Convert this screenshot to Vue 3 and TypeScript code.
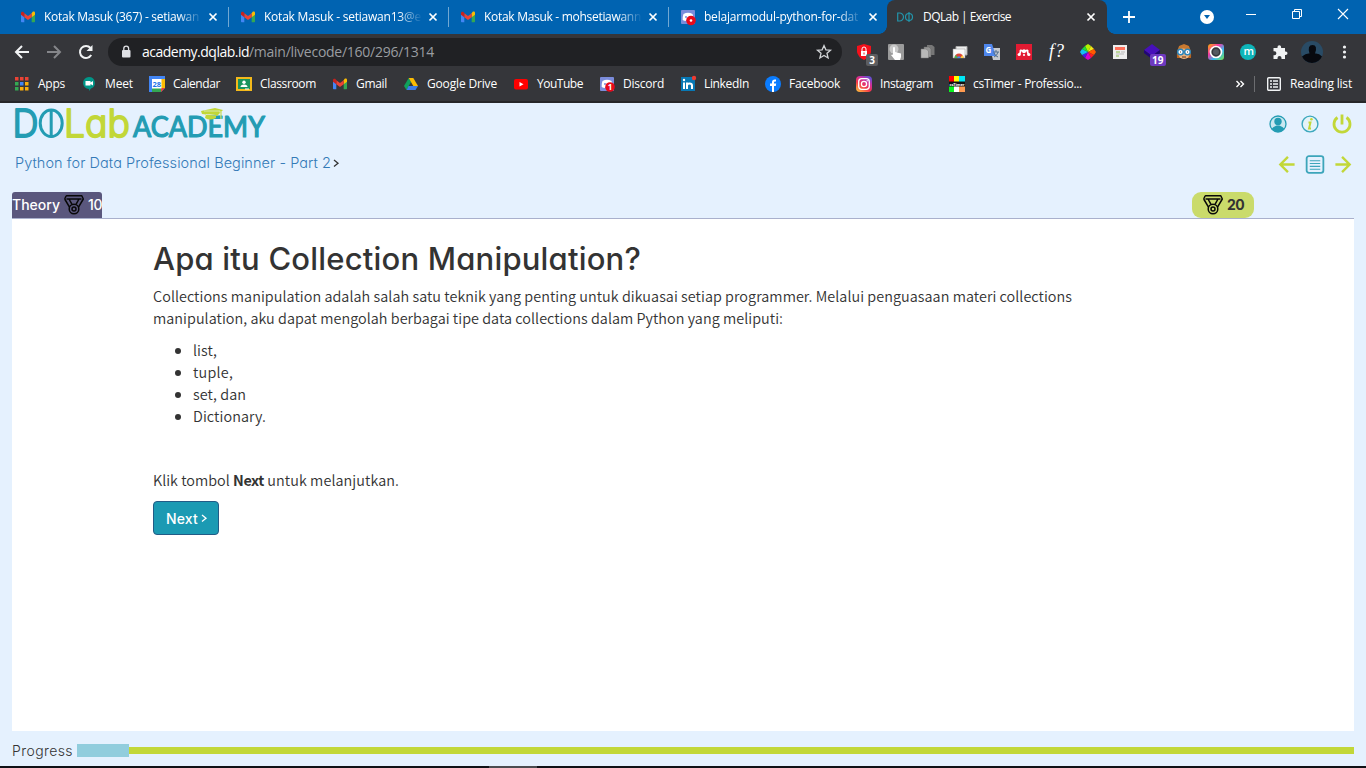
<script setup lang="ts">
interface Tab { title: string; width: number; icon: 'gmail' | 'discord' }
interface Bookmark { label: string; width: number; icon: string }

const tabs: Tab[] = [
  { title: 'Kotak Masuk (367) - setiawan', width: 155, icon: 'gmail' },
  { title: 'Kotak Masuk - setiawan13@e', width: 157, icon: 'gmail' },
  { title: 'Kotak Masuk - mohsetiawann', width: 157, icon: 'gmail' },
  { title: 'belajarmodul-python-for-dat', width: 154, icon: 'discord' },
]

const bookmarks: Bookmark[] = [
  { label: 'Apps', width: 27, icon: 'apps' },
  { label: 'Meet', width: 28, icon: 'meet' },
  { label: 'Calendar', width: 47, icon: 'calendar' },
  { label: 'Classroom', width: 56, icon: 'classroom' },
  { label: 'Gmail', width: 31, icon: 'gmail' },
  { label: 'Google Drive', width: 70, icon: 'drive' },
  { label: 'YouTube', width: 46, icon: 'youtube' },
  { label: 'Discord', width: 41, icon: 'discord1' },
  { label: 'LinkedIn', width: 45, icon: 'linkedin' },
  { label: 'Facebook', width: 51, icon: 'facebook' },
  { label: 'Instagram', width: 53, icon: 'instagram' },
  { label: 'csTimer - Professio...', width: 109, icon: 'cstimer' },
]

const topics: { text: string; width: number }[] = [
  { text: 'list,', width: 24 },
  { text: 'tuple,', width: 40 },
  { text: 'set, dan', width: 53 },
  { text: 'Dictionary.', width: 73 },
]

// Tracks a label so that it fills the given width in pixels.
const vFit = {
  mounted(el: HTMLElement, binding: { value: number }) {
    const natural = el.getBoundingClientRect().width
    const count = (el.textContent ?? '').length
    if (count > 0) el.style.letterSpacing = `${(binding.value - natural) / count}px`
  },
}
</script>

<template>
  <div class="window">
    <svg class="defs" width="0" height="0">
      <defs>
        <symbol id="gmail" viewBox="0 0 16 16">
          <path d="M1 4v8.200c0 .6.4 1 1 1h2.300V7z" fill="#4285f4" />
          <path d="M15 4v8.200c0 .6-.4 1-1 1h-2.300V7z" fill="#34a853" />
          <path d="M11.700 4.300v3.900L15 5.700V4c0-1.300-1.500-1.800-2.500-1z" fill="#fbbc04" />
          <path d="M4.300 8.200V4.300L8 7l3.700-2.700v3.900L8 11z" fill="#ea4335" />
          <path d="M1 4v1.700l3.300 2.500V4.300L3.500 3C2.500 2.300 1 2.800 1 4z" fill="#c5221f" />
        </symbol>
        <symbol id="discord" viewBox="0 0 16 16">
          <rect x="1" y="1" width="14" height="14" rx="1" fill="#7b8cdb" />
          <path d="M3.500 5Q8 2.600 12.500 5q1.300 3 .8 6-1.500 1-3 1l-.7-1H6.400l-.7 1q-1.500 0-3-1-.3-3 .8-6z" fill="#fff" />
          <circle cx="6" cy="8" r="1" fill="#7b8cdb" /><circle cx="10" cy="8" r="1" fill="#7b8cdb" />
        </symbol>
        <symbol id="cross" viewBox="0 0 10 10">
          <path d="M1.500 1.500l7 7M8.500 1.500l-7 7" stroke="#fff" stroke-width="1.700" />
        </symbol>
        <symbol id="medal" viewBox="0 0 20 20">
          <g fill="none" stroke="#080808" stroke-width="1.500" stroke-linejoin="round">
            <path d="M2.200.8h15.600L19.300 4l-4.800 8.200M.7 4l1.500-3.200M.7 4l4.800 8.200M2.500 4h15M5 4l3 5.300M15 4l-3 5.300" />
            <circle cx="10" cy="14" r="4.800" /><circle cx="10" cy="14" r="2" />
          </g>
        </symbol>
      </defs>
    </svg>

    <header class="tabstrip">
      <div v-for="tab in tabs" :key="tab.title" class="tab">
        <svg class="favicon" viewBox="0 0 16 16">
          <use :href="'#' + tab.icon" width="16" height="16" />
          <g v-if="tab.icon === 'discord'"><circle cx="11" cy="11.500" r="4.800" fill="#e80a1a" /><circle cx="11" cy="11.500" r="1.300" fill="#fff" /></g>
        </svg>
        <div class="tab-title"><span v-fit="tab.width">{{ tab.title }}</span></div>
        <svg class="cross"><use href="#cross" width="10" height="10" /></svg>
      </div>
      <div class="tab active">
        <svg class="favicon" viewBox="0 0 16 16" fill="none" stroke="#2295ab" stroke-width="1.200">
          <path d="M.7 4v8h1.800a4 4 0 0 0 0-8zM12 3v10" /><circle cx="12" cy="8" r="3.500" />
        </svg>
        <div class="tab-title"><span v-fit="88">DQLab | Exercise</span></div>
        <svg class="cross"><use href="#cross" width="10" height="10" /></svg>
      </div>
      <svg class="new-tab" viewBox="0 0 12 12"><path d="M6 0v12M0 6h12" stroke="#fff" stroke-width="1.800" /></svg>
      <svg class="controls" viewBox="0 0 160 34" fill="none" stroke="#fff">
        <circle cx="8" cy="17" r="7" fill="#fff" stroke="none" /><path d="M5 15h6l-3 4z" fill="#0063b1" stroke="none" />
        <path d="M47 14.500h10" />
        <path d="M93.500 11.500h7v7h-7zM95.500 11.500v-2h7v7h-2" />
        <path d="M139 9l10 10M149 9l-10 10" stroke-width="1.100" />
      </svg>
    </header>

    <div class="toolbar">
      <svg class="nav" viewBox="0 0 16 16"><path d="M15 8H2M8 2L2 8l6 6" /></svg>
      <svg class="nav dim" viewBox="0 0 16 16"><path d="M1 8h13M8 2l6 6-6 6" /></svg>
      <svg class="nav" viewBox="0 0 16 16"><path d="M13.200 11A6 6 0 1 1 12.500 4" /><path d="M14.500 1v6h-6z" class="solid" /></svg>
      <div class="address">
        <svg class="lock" viewBox="0 0 10 14"><rect x="1" y="5" width="8.500" height="7.500" rx="1" fill="#dfe1e5" /><path d="M2.800 5V3.500a2.400 2.400 0 0 1 4.800 0V5" fill="none" stroke="#dfe1e5" stroke-width="1.300" /></svg>
        <span v-fit="107" class="host">academy.dqlab.id</span><span v-fit="185" class="path">/main/livecode/160/296/1314</span>
        <svg class="star" viewBox="0 0 16 16"><path d="M8 1.500l1.900 4.300 4.600.4L11 9.300l1.100 4.700L8 11.500 3.900 14 5 9.300 1.500 6.200l4.600-.4z" fill="none" stroke="#d2d4d7" stroke-width="1.300" /></svg>
      </div>
      <div class="extensions">
        <svg viewBox="0 0 16 16">
          <path d="M8 0l7 2v6q-1 5-7 8-6-3-7-8V2z" fill="#f4101b" /><path d="M5 7h6v5H5z" fill="#fff" /><path d="M6 7V5a2 2 0 0 1 4 0v2" fill="none" stroke="#fff" /><path d="M8 8.500v2" stroke="#f4101b" />
          <rect x="10" y="10" width="12" height="12" rx="2" fill="#5c5d60" /><text x="13.200" y="20" class="badge">3</text>
        </svg>
        <svg viewBox="0 0 16 16"><rect width="16" height="16" rx="1" fill="#9b9b9b" /><circle cx="6" cy="5" r="4.500" fill="#c9c9c9" /><path d="M5 3.500q1-1 2 0V8l6 1.500V13l-1 3H7l-4-5 2-.5z" fill="#fff" /></svg>
        <svg viewBox="0 0 16 16"><path d="M7 1h5l2.500 2v8H7z" fill="#777" /><path d="M4 3h5l2 2v8H4z" fill="#969696" stroke="#666" stroke-width=".5" /><path d="M1 5h5l2.500 2v7H1z" fill="#b8b8b8" stroke="#777" stroke-width=".5" /></svg>
        <svg viewBox="0 0 16 16"><path d="M4 2.500h11V11H4z" fill="#eee" stroke="#aaa" /><path d="M1 5h12v9H1z" fill="#fafafa" stroke="#999" stroke-width=".5" /><path d="M2.500 14a4.500 4.500 0 0 1 9 0z" fill="#db4437" /><path d="M2.500 14q0-2 1.200-3l3 3z" fill="#4caf50" /><path d="M8 14l2.500-3q1 1 1 3z" fill="#ffcd40" /><path d="M5.300 14a1.700 1.700 0 0 1 3.400 0z" fill="#4285f4" /></svg>
        <svg viewBox="0 0 16 16"><path d="M6 4h10v12H9z" fill="#c5c9ce" /><path d="M0 0h8l4 12H0z" fill="#4f87ed" /><text x="1.500" y="8.500" class="glyph">G</text><path d="M9 8h6M12 6v2m2 0q-1 4-4 5m0-4q1 3 4 4" fill="none" stroke="#526f8e" /></svg>
        <svg viewBox="0 0 16 16"><path d="M0 0h16v16H0z" fill="#e21b32" /><path d="M3.200 10.300Q5 9 4.200 6M12.800 10.300Q11 9 11.800 6M4.200 6L8 7.500 11.800 6" fill="none" stroke="#fff" stroke-width="1.600" /><circle cx="8" cy="7.300" r="2" fill="#fff" /><circle cx="3.200" cy="10.500" r="1.600" fill="#fff" /><circle cx="8" cy="11" r="1.100" fill="#fff" /><circle cx="12.800" cy="10.500" r="1.600" fill="#fff" /></svg>
        <svg viewBox="0 0 16 16"><text x="1" y="13" class="formula" textLength="15">f?</text></svg>
        <svg viewBox="0 0 16 16"><path d="M8 8L5 2l3-2 3 2z" fill="#b6f000" /><path d="M8 8l3-6 3 3z" fill="#f4e814" /><path d="M8 8l6-3 2 3-2 3z" fill="#ff5a00" /><path d="M8 8l6 3-3 3z" fill="#ff1d20" /><path d="M8 8l3 6-3 2-3-2z" fill="#db00c8" /><path d="M8 8l-3 6-3-3z" fill="#4b13ed" /><path d="M8 8l-6 3-2-3 2-3z" fill="#14bff4" /><path d="M8 8L2 5l3-3z" fill="#20dd38" /></svg>
        <svg viewBox="0 0 16 16"><path d="M1 1h14v14H1z" fill="#eee" /><path d="M3 3h10v3H3z" fill="#ff705c" /><path d="M4 8h4M4 12h3" stroke="#8bbf48" /><path d="M9 8h4M4 10h8" stroke="#bbb" /></svg>
        <svg viewBox="0 0 16 16"><path d="M8 0l8 6-8 6-8-6z" fill="#4710ba" /><path d="M0 9l8 6 8-6v-3l-8 6-8-6z" fill="#210579" /><rect x="6" y="10" width="16" height="12" rx="2" fill="#6d39c1" /><text x="8" y="20" class="badge">19</text></svg>
        <svg viewBox="0 0 16 16"><path d="M1 14q-1-13 7-13t7 13z" fill="#b86521" /><ellipse cx="8" cy="9" rx="6" ry="6" fill="#efb47c" /><path d="M2 6q4-3 12 0l-1-4-5-2-5 2z" fill="#c87930" /><g fill="#fff" stroke="#2b85bb" stroke-width="1.500"><circle cx="4.500" cy="8" r="2.800" /><circle cx="11.500" cy="8" r="2.800" /></g><path d="M4 8h1m6 0h1M6 13h4" stroke="#553021" /></svg>
        <svg viewBox="0 0 16 16"><defs><linearGradient id="rainbow" x2="1" y2="1"><stop stop-color="#ffb000" /><stop offset=".35" stop-color="#f638a3" /><stop offset=".65" stop-color="#31b9ef" /><stop offset="1" stop-color="#7ce44b" /></linearGradient></defs><rect width="16" height="16" rx="3" fill="url(#rainbow)" /><circle cx="8" cy="8" r="5.500" fill="#34383d" stroke="#fff" stroke-width="1.700" /><circle cx="8" cy="8" r="3" fill="#555a61" /></svg>
        <svg viewBox="0 0 16 16"><circle cx="8" cy="8" r="8" fill="#0eb5b9" /><text x="3.400" y="11.300" class="letter-m">m</text></svg>
        <svg viewBox="0 0 16 16"><path d="M1.500 4H5.500V3a1.800 1.800 0 0 1 3.600 0v1H13v3.500h.7a1.800 1.800 0 0 1 0 3.600H13V15H9.500v-1a2 2 0 0 0-4 0v1h-4v-3.700h.9a2 2 0 0 0 0-4h-.9z" fill="#f1f3f4" /></svg>
        <svg viewBox="0 0 16 16"><circle cx="8" cy="8" r="11" fill="#294b65" /><path d="M-2 12.500Q2 9 5.500 9.500 3 1 8.500 1t2.500 8.500q4-.5 7 3A11 11 0 0 1-2 12.500z" fill="#07090f" /></svg>
        <svg viewBox="0 0 16 16"><g fill="#f1f3f4"><circle cx="8.500" cy="3" r="1.600" /><circle cx="8.500" cy="8" r="1.600" /><circle cx="8.500" cy="13" r="1.600" /></g></svg>
      </div>
    </div>

    <nav class="bookmarks">
      <div v-for="mark in bookmarks" :key="mark.label" class="bookmark">
        <svg viewBox="0 0 16 16">
          <g v-if="mark.icon === 'apps'"><path d="M1 1h3.500v3.500H1zM6 1h3.500v3.500H6zM11 1h3.500v3.500H11z" fill="#ea4335" /><path d="M1 6h3.500v3.500H1z" fill="#34a853" /><path d="M6 6h3.500v3.500H6z" fill="#4285f4" /><path d="M11 6h3.500v3.500H11zM6 11h3.500v3.500H6zM11 11h3.500v3.500H11z" fill="#fbad0a" /><path d="M1 11h3.500v3.500H1z" fill="#34a853" /></g>
          <g v-else-if="mark.icon === 'meet'"><path d="M8 1a6 6 0 0 1 2 11.600L8 15v-2A6 6 0 0 1 8 1z" fill="#009688" /><path d="M4.500 5h5v1.500L12 5v4.500L9.500 8v1.500h-5z" fill="#fff" /></g>
          <g v-else-if="mark.icon === 'calendar'"><path d="M0 0h16v12l-4 4H0z" fill="#4285f4" /><path d="M12 3h4v9h-4z" fill="#fbbc04" /><path d="M3 12h9v4H3z" fill="#34a853" /><path d="M12 12h4l-4 4z" fill="#ea4335" /><path d="M3 3h9.500v9.500H3z" fill="#fff" /><text x="3.400" y="10.500" class="date">28</text></g>
          <g v-else-if="mark.icon === 'classroom'"><path d="M0 1h16v14H0z" fill="#f4b91b" /><path d="M2 3h12v10H2z" fill="#19945c" /><circle cx="8" cy="6.300" r="1.700" fill="#fff" /><path d="M4.500 11q0-2.500 3.500-2.500t3.500 2.500z" fill="#fff" /><path d="M9 13h4" stroke="#fff" /></g>
          <use v-else-if="mark.icon === 'gmail'" href="#gmail" width="16" height="16" />
          <g v-else-if="mark.icon === 'drive'"><path d="M5.700 2L1 10l2.500 4L8 6z" fill="#0fa15c" /><path d="M5.700 2h4.600L15 10h-4.700z" fill="#fbbc04" /><path d="M5.500 10H15l-2.500 4h-9z" fill="#3b7de9" /></g>
          <g v-else-if="mark.icon === 'youtube'"><rect x="1" y="3" width="14" height="10.500" rx="2" fill="#f00" /><path d="M6.500 6l4 2.300-4 2.300z" fill="#fff" /></g>
          <g v-else-if="mark.icon === 'discord1'"><use href="#discord" width="16" height="16" /><circle cx="11" cy="11" r="4.800" fill="#e80a1a" /><text x="8.800" y="14" class="count">1</text></g>
          <g v-else-if="mark.icon === 'linkedin'"><path d="M1 1h14v14H1z" fill="#0878b4" /><path d="M4 6.500V13M7 13V6.500m0 3q0-2 2.500-2t2.500 2V13" fill="none" stroke="#fff" stroke-width="2" /><circle cx="4" cy="4" r="1.200" fill="#fff" /><circle cx="14" cy="2" r="2.200" fill="#ef3b32" /></g>
          <g v-else-if="mark.icon === 'facebook'"><circle cx="8" cy="8" r="8" fill="#0a7cff" /><path d="M7 16V10H5V7.500h2V6q0-3 4-2.500v2H10q-1 0-1 1v1h2.200L10.800 10H9v6z" fill="#fff" /></g>
          <g v-else-if="mark.icon === 'instagram'"><defs><linearGradient id="insta" x1="0" y1="1" x2=".7" y2="0"><stop stop-color="#ffd13b" /><stop offset=".45" stop-color="#f43649" /><stop offset=".75" stop-color="#cb30a2" /><stop offset="1" stop-color="#694dce" /></linearGradient></defs><rect width="16" height="16" rx="4" fill="url(#insta)" /><g fill="none" stroke="#fff" stroke-width="1.300"><rect x="2.700" y="2.700" width="10.600" height="10.600" rx="3" /><circle cx="8" cy="8" r="2.600" /></g><circle cx="11.200" cy="4.800" r=".7" fill="#fff" /></g>
          <g v-else><path d="M0 0h5v6H0z" fill="#f00" /><path d="M5 0h5v6H5z" fill="#ff0" /><path d="M10 0h6v6h-6z" fill="#00e6f5" /><path d="M0 10h5v6H0z" fill="#08f51d" /><path d="M5 10h5v6H5z" fill="#fff" /><path d="M10 10h6v6h-6z" fill="#ff9b50" /><path d="M0 5.500h16v5H0z" fill="#111" /><text x=".5" y="9.500" class="cs" textLength="15">csTimer</text></g>
        </svg>
        <span v-fit="mark.width">{{ mark.label }}</span>
      </div>
      <div class="reading">
        <svg class="more" viewBox="0 0 10 10"><path d="M1.500 2l3 3-3 3M5.500 2l3 3-3 3" fill="none" stroke="#fff" stroke-width="1.400" /></svg>
        <i class="divider" />
        <svg class="list-icon" viewBox="0 0 14 14"><rect x=".7" y=".7" width="12.600" height="12.600" rx="1" fill="none" stroke="#f1f3f4" stroke-width="1.400" /><path d="M3 4h2M6 4h5M3 7h2M6 7h5M3 10h2M6 10h5" stroke="#f1f3f4" stroke-width="1.600" /></svg>
        <span v-fit="62">Reading list</span>
      </div>
    </nav>

    <main class="page">
      <div class="brand-row">
        <svg class="logo" viewBox="0 0 252 34">
          <g class="logo-thin">
            <text x="-1.500" y="30" textLength="26" lengthAdjust="spacingAndGlyphs" fill="#239cb3" stroke="#239cb3">D</text>
            <text x="50" y="30" textLength="66" lengthAdjust="spacingAndGlyphs" fill="#c2d738" stroke="#c2d738">Lab</text>
          </g>
          <g fill="none" stroke="#239cb3" stroke-width="3"><ellipse cx="37.200" cy="16.200" rx="11" ry="13.300" /><path d="M37.200 2v28.500" /></g>
          <text class="logo-academy" x="119" y="30" textLength="132" lengthAdjust="spacingAndGlyphs">ACADEMY</text>
          <path d="M187 4l14-3 8 2-6 6-15-2zM192 7l-1 4q5 3 11 0V8z" fill="#c2d738" /><path d="M190 4l16 0 1 8" fill="none" stroke="#e5f1fe" stroke-width=".6" /><path d="M207 5v7" stroke="#c2d738" />
        </svg>
        <div class="account">
          <svg viewBox="0 0 20 20"><circle cx="10" cy="10" r="8" fill="#c9e8f0" stroke="#239cb3" stroke-width="1.300" /><circle cx="10" cy="7.500" r="3.700" fill="#239cb3" /><path d="M3.500 15q1-2 5-3.500h3q4 1.500 5 3.500-6 6-13 0z" fill="#239cb3" /></svg>
          <svg viewBox="0 0 20 20"><circle cx="10" cy="10" r="7.900" fill="#e5f3f8" stroke="#3ca8bd" stroke-width="1.400" /><circle cx="11.400" cy="5.200" r="1.300" fill="#c2d738" /><path d="M8.500 8.500h2L9 14.500h2" fill="none" stroke="#c2d738" stroke-width="1.900" /></svg>
          <svg viewBox="0 0 20 20" fill="none" stroke="#c2d738" stroke-width="2.800"><path d="M10 .5v10M5.500 3.500a8 8 0 1 0 9 0" /></svg>
        </div>
      </div>

      <div class="crumb-row">
        <span v-fit="316" class="crumb">Python for Data Professional Beginner - Part 2</span>
        <svg class="chevron" viewBox="0 0 6 9"><path d="M1 1l4 3.200-4 3.300" fill="none" stroke="#333" stroke-width="1.300" /></svg>
        <div class="pager">
          <svg viewBox="0 0 20 20" fill="none" stroke="#c2d738" stroke-width="2.500"><path d="M18 10H3M11 2l-8 8 8 8" /></svg>
          <svg viewBox="0 0 20 20" fill="none" stroke="#3ca5ba"><rect x="1.200" y="1.200" width="17.600" height="17.600" rx="2.500" stroke-width="1.900" /><path d="M4.500 6h11M4.500 9h11M4.500 12h11M4.500 15h11" stroke-width="1.200" /></svg>
          <svg viewBox="0 0 20 20" fill="none" stroke="#c2d738" stroke-width="2.500"><path d="M2 10h15M9 2l8 8-8 8" /></svg>
        </div>
      </div>

      <div class="lesson-tabs">
        <div class="theory"><span v-fit="48">Theory</span><svg viewBox="0 0 20 20"><use href="#medal" width="20" height="20" /></svg><span v-fit="14">10</span></div>
        <div class="points"><svg viewBox="0 0 20 20"><use href="#medal" width="20" height="20" /></svg><span v-fit="17">20</span></div>
      </div>

      <section class="lesson">
        <h1><span v-fit="488">Apa itu Collection Manipulation?</span></h1>
        <p><span v-fit="919">Collections manipulation adalah salah satu teknik yang penting untuk dikuasai setiap programmer. Melalui penguasaan materi collections</span><br><span v-fit="630">manipulation, aku dapat mengolah berbagai tipe data collections dalam Python yang meliputi:</span></p>
        <ul>
          <li v-for="topic in topics" :key="topic.text"><span v-fit="topic.width">{{ topic.text }}</span></li>
        </ul>
        <p class="hint"><span v-fit="80">Klik tombol </span><b v-fit="31">Next</b><span v-fit="135"> untuk melanjutkan.</span></p>
        <button type="button"><span v-fit="32">Next</span><svg viewBox="0 0 6 9"><path d="M1 1l4 3.200-4 3.300" fill="none" stroke="#fff" stroke-width="1.300" /></svg></button>
      </section>

      <footer class="progress">
        <span v-fit="61">Progress</span>
        <div class="track"><i class="done" /><i class="rest" /></div>
      </footer>
    </main>
    <div class="taskbar"><i /></div>
  </div>
</template>

<style>
body { margin: 0; overflow: hidden; }
</style>

<style scoped>
* { box-sizing: border-box; }
svg { display: block; flex: none; overflow: visible; }
.defs { position: absolute; }
.window { width: 1366px; height: 768px; display: flex; flex-direction: column; overflow: hidden; background: #e5f1fe; font-family: "Open Sans", "Noto Sans", sans-serif; }
.window span, .window b { display: inline-block; white-space: pre; }

.tabstrip { height: 34px; flex: none; display: flex; align-items: center; background: #0063b1; padding-left: 8px; color: #fff; font-size: 12px; }
.tab { width: 220px; height: 34px; flex: none; display: flex; align-items: center; padding-left: 12px; position: relative; }
.tab:not(.active):nth-child(-n+3)::after { content: ""; width: 1px; height: 20px; background: #71a8d3; position: absolute; right: -1px; top: 7px; }
.favicon { width: 16px; height: 16px; margin-right: 8px; }
.tab-title { width: 158px; line-height: 18px; margin-right: 6px; mask-image: linear-gradient(90deg, #000 134px, transparent 158px); }
.cross { width: 10px; height: 10px; }
.active { background: #35363a; border-radius: 8px 8px 0 0; padding-left: 10px; width: 220px; margin-left: -1px; margin-right: 1px; }
.active .favicon { margin-right: 10px; }
.active .tab-title { width: 158px; mask-image: none; margin-right: 5px; }
.active::before, .active::after { content: ""; position: absolute; bottom: 0; width: 8px; height: 8px; }
.active::before { left: -8px; background: radial-gradient(circle at 0 0, transparent 7.500px, #35363a 8px); }
.active::after { right: -8px; background: radial-gradient(circle at 100% 0, transparent 7.500px, #35363a 8px); }
.new-tab { width: 12px; height: 12px; margin-left: 15px; }
.controls { width: 160px; height: 34px; margin-left: 64px; }

.toolbar { height: 36px; flex: none; display: flex; align-items: center; background: #35363a; padding-left: 14px; }
.nav { width: 16px; height: 16px; margin-right: 16px; fill: none; stroke: #f1f3f4; stroke-width: 2; }
.nav.dim { stroke: #85868a; }
.nav .solid { fill: #f1f3f4; stroke: none; }
.address { width: 734px; height: 28px; margin-left: -2px; display: flex; align-items: center; padding: 0 10px 0 13px; border-radius: 14px; background: #202124; font-size: 14px; line-height: 20px; }
.lock { width: 10px; height: 14px; margin-right: 11px; }
.host { color: #fff; }
.path { color: #9a9da1; }
.star { width: 16px; height: 16px; margin-left: auto; }
.extensions { display: flex; gap: 16px; margin-left: 14px; }
.extensions svg { width: 16px; height: 16px; }
.badge { fill: #fff; font: 700 10px "Open Sans", sans-serif; }
.glyph { fill: #fff; font: 700 8px "Open Sans", sans-serif; }
.formula { fill: #fff; font: italic 18px "Liberation Serif", serif; }
.letter-m { fill: #fff; font: 600 11px "Open Sans", sans-serif; }

.bookmarks { height: 33px; flex: none; display: flex; align-items: center; gap: 16px; padding: 0 14px 3px; background: #35363a; border-bottom: 2px solid #262729; color: #fff; font-size: 12px; line-height: 18px; }
.bookmark { display: flex; align-items: center; gap: 8px; }
.bookmark svg { width: 16px; height: 16px; }
.date { fill: #1a73e8; font: 700 7.500px "Open Sans", sans-serif; }
.count { fill: #fff; font: 700 8px "Open Sans", sans-serif; }
.cs { fill: #fff; font: 700 4px "Open Sans", sans-serif; }
.reading { margin-left: auto; display: flex; align-items: center; }
.more { width: 10px; height: 10px; margin-right: 9px; }
.divider { width: 1px; height: 16px; background: #6c6d70; margin-right: 12px; }
.list-icon { width: 14px; height: 14px; margin-right: 9px; }

.page { flex: 1; display: flex; flex-direction: column; padding: 0 12px; color: #333; font-family: Inter, sans-serif; font-feature-settings: "cv11"; font-optical-sizing: none; }
.brand-row { height: 43px; display: flex; justify-content: space-between; padding: 4px 2px 0; }
.logo { width: 252px; height: 34px; }
.logo-thin { font: 300 38px Inter, sans-serif; stroke-width: 1.800; font-feature-settings: "cv11"; stroke-linejoin: round; }
.logo-academy { font: 400 28px Lato, sans-serif; fill: #239cb3; stroke: #239cb3; stroke-width: 1.200; stroke-linejoin: round; }
.account { display: flex; gap: 12px; padding-top: 7px; }
.account svg { width: 20px; height: 20px; }
.crumb-row { height: 46px; display: flex; align-items: flex-start; padding: 6px 1px 0 3px; }
.crumb { color: #337ab7; font-size: 14.500px; font-weight: 350; line-height: 22px; }
.chevron { width: 6px; height: 9px; margin: 7px 0 0 2px; }
.pager { display: flex; gap: 8px; margin-left: auto; padding-top: 3px; }
.pager svg { width: 20px; height: 19px; }
.lesson-tabs { height: 27px; flex: none; display: flex; justify-content: space-between; border-bottom: 1px solid #a9b0cc; font-size: 14px; line-height: 26px; }
.theory { width: 90px; height: 26px; display: flex; align-items: center; background: #5a577d; color: #fff; border-radius: 3px 3px 0 0; font-weight: 500; }
.theory svg { width: 20px; height: 20px; margin: 0 4px; }
.points { width: 62px; height: 26px; margin-right: 100px; display: flex; align-items: center; padding-left: 11px; gap: 4px; background: #cadb6b; border-radius: 9px; font-weight: 700; }
.points svg { width: 20px; height: 20px; }
.lesson { height: 512px; flex: none; background: #fff; padding: 20px 141px 0; font: 350 14.400px/22px "Noto Sans CJK SC", sans-serif; }
h1 { margin: 0 0 9px; height: 37px; font: 500 31px/39px Inter, sans-serif; font-feature-settings: "cv11"; font-optical-sizing: none; }
p { margin: 0 0 10px; height: 44px; }
p span, p b, li span { height: 22px; vertical-align: top; }
ul { margin: 0; padding-left: 40px; height: 88px; }
li { height: 22px; }
.hint { margin: 42px 0 10px; height: 22px; }
button { width: 66px; height: 34px; padding: 0 0 0 12px; display: flex; align-items: center; gap: 3px; background: #1b9ab3; border: 1px solid #225b86; border-radius: 4px; color: #fff; font: 500 14px Inter, sans-serif; }
button svg { width: 6px; height: 9px; }
.progress { height: 35px; display: flex; align-items: center; padding-top: 4px; font-size: 14px; font-weight: 300; line-height: 20px; }
.track { flex: 1; display: flex; align-items: center; margin-left: 4px; }
.done { width: 52px; height: 13px; background: #91cddd; }
.rest { flex: 1; height: 7px; background: #c2d738; }
.taskbar { height: 2px; flex: none; background: #101116; }
.taskbar i { display: block; width: 48px; height: 2px; margin-left: 489px; background: #4b4c50; }
</style>
